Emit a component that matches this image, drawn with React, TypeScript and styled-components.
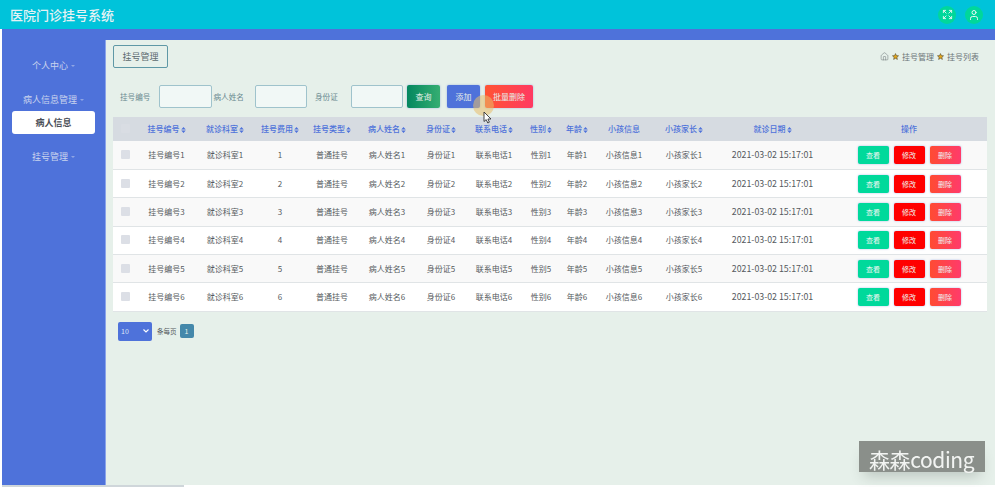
import React from 'react';
import styled, { createGlobalStyle } from 'styled-components';
import { Expand, House, User } from 'lucide-react';

const GlobalStyle = createGlobalStyle`
  html, body {
    margin: 0;
    padding: 0;
    overflow: hidden;
    background: #fff;
    font-family: "Noto Sans CJK SC", "Noto Sans", sans-serif;
  }
  * { box-sizing: border-box; }
`;

const columns = [
  { title: '挂号编号', prefix: '挂号编号', width: 59, sort: true },
  { title: '就诊科室', prefix: '就诊科室', width: 58, sort: true },
  { title: '挂号费用', prefix: '', width: 52, sort: true },
  { title: '挂号类型', prefix: '普通挂号', width: 52, sort: true, plain: true },
  { title: '病人姓名', prefix: '病人姓名', width: 58, sort: true },
  { title: '身份证', prefix: '身份证', width: 50, sort: true },
  { title: '联系电话', prefix: '联系电话', width: 56, sort: true },
  { title: '性别', prefix: '性别', width: 38, sort: true },
  { title: '年龄', prefix: '年龄', width: 34, sort: true },
  { title: '小孩信息', prefix: '小孩信息', width: 60, sort: false },
  { title: '小孩家长', prefix: '小孩家长', width: 60, sort: true },
];

const rows = [1, 2, 3, 4, 5, 6];

const SortIcon = () => (
  <SortSvg viewBox="0 0 6 8">
    <path d="M3 0 L6 3.4 H0 Z M3 8 L0 4.6 H6 Z" fill="currentColor" />
  </SortSvg>
);

const Star = () => (
  <StarSvg viewBox="0 0 24 24">
    <path
      d="M12 2 L15 8.8 L22.4 9.6 L16.8 14.6 L18.4 22 L12 18.2 L5.6 22 L7.2 14.6 L1.6 9.6 L9 8.8 Z"
      fill="#e3a51c"
      stroke="#4f4a30"
      strokeWidth="2"
    />
  </StarSvg>
);

export default function App() {
  return (
    <Page>
      <GlobalStyle />
      <Header>
        <Title>医院门诊挂号系统</Title>
        <HeaderActions>
          <RoundButton>
            <Expand size={11} strokeWidth={2} />
          </RoundButton>
          <RoundButton>
            <User size={12} strokeWidth={2} />
          </RoundButton>
        </HeaderActions>
      </Header>
      <Body>
        <Sidebar>
          <MenuGroup>
            <MenuTitle>
              个人中心<Caret />
            </MenuTitle>
          </MenuGroup>
          <MenuGroup>
            <MenuTitle>
              病人信息管理<Caret />
            </MenuTitle>
            <MenuItem>病人信息</MenuItem>
          </MenuGroup>
          <MenuGroup>
            <MenuTitle>
              挂号管理<Caret />
            </MenuTitle>
          </MenuGroup>
        </Sidebar>
        <Content>
          <TopBar>
            <TabButton>挂号管理</TabButton>
            <Breadcrumb>
              <House size={9} strokeWidth={1.4} />
              <Star />
              <span>挂号管理</span>
              <Star />
              <span>挂号列表</span>
            </Breadcrumb>
          </TopBar>
          <SearchRow>
            <SearchLabel $width={40} $pad={1}>挂号编号</SearchLabel>
            <SearchInput />
            <SearchLabel $width={43} $pad={2}>病人姓名</SearchLabel>
            <SearchInput />
            <SearchLabel $width={43.5} $pad={8}>身份证</SearchLabel>
            <SearchInput />
            <ActionButton $bg="linear-gradient(90deg, #04875f, #35ae72)" $width={33} $left={4}>
              查询
            </ActionButton>
            <ActionButton $bg="#4e72da" $width={33} $left={7}>
              添加
            </ActionButton>
            <ActionButton $bg="linear-gradient(90deg, #ff5433, #ff3a62)" $width={48} $left={5}>
              批量删除
            </ActionButton>
          </SearchRow>
          <Table>
            <colgroup>
              <col style={{ width: 24 }} />
              {columns.map((c) => (
                <col key={c.title} style={{ width: c.width }} />
              ))}
              <col style={{ width: 117 }} />
              <col />
            </colgroup>
            <thead>
              <tr>
                <HeadCell>
                  <Check $light />
                </HeadCell>
                {columns.map((c) => (
                  <HeadCell key={c.title}>
                    {c.title}
                    {c.sort && <SortIcon />}
                  </HeadCell>
                ))}
                <HeadCell>
                  就诊日期
                  <SortIcon />
                </HeadCell>
                <HeadCell>操作</HeadCell>
              </tr>
            </thead>
            <tbody>
              {rows.map((n) => (
                <Row key={n}>
                  <Cell>
                    <Check />
                  </Cell>
                  {columns.map((c) => (
                    <Cell key={c.title}>{c.plain ? c.prefix : `${c.prefix}${n}`}</Cell>
                  ))}
                  <DateCell>2021-03-02 15:17:01</DateCell>
                  <Cell $actions>
                    <RowActions>
                      <RowButton $bg="#00d99b">查看</RowButton>
                      <RowButton $bg="#ff0000">修改</RowButton>
                      <RowButton $bg="linear-gradient(90deg, #ff4b33, #ff3b6b)">删除</RowButton>
                    </RowActions>
                  </Cell>
                </Row>
              ))}
            </tbody>
          </Table>
          <Pager>
            <PageSelect>
              <span>10</span>
              <svg width="6" height="4" viewBox="0 0 6 4">
                <path d="M0.5 0.5 L3 3 L5.5 0.5" fill="none" stroke="#fff" strokeWidth="1.1" />
              </svg>
            </PageSelect>
            <PagerText>条每页</PagerText>
            <PageNumber>1</PageNumber>
          </Pager>
        </Content>
      </Body>
      <Watermark>森森coding</Watermark>
      <Pointer>
        <svg width="9" height="13" viewBox="0 0 9 13">
          <path d="M1 1 V10.5 L3.2 8.6 L4.8 12 L6.4 11.2 L4.9 8 H8 Z" fill="#fff" stroke="#333" strokeWidth="0.9" />
        </svg>
      </Pointer>
      <ScrollThumb />
    </Page>
  );
}

const Page = styled.div`
  position: relative;
  width: 995px;
  height: 487px;
  display: flex;
  flex-direction: column;
  overflow: hidden;
  filter: blur(0.45px);
`;

const Header = styled.header`
  height: 29px;
  flex: none;
  display: flex;
  align-items: center;
  justify-content: space-between;
  padding: 0 12px 0 10px;
  background: #00c3da;
`;

const Title = styled.div`
  font-size: 13px;
  font-weight: 500;
  color: #e4f2f4;
`;

const HeaderActions = styled.div`
  display: flex;
  gap: 9px;
`;

const RoundButton = styled.div`
  width: 18px;
  height: 18px;
  border-radius: 50%;
  display: flex;
  align-items: center;
  justify-content: center;
  background: #00d79b;
  color: #e8f7f2;
`;

const Body = styled.div`
  height: 456px;
  flex: none;
  display: flex;
  margin-left: 2px;
  padding-top: 11px;
  background: #4e72da;
`;

const Sidebar = styled.nav`
  width: 103px;
  flex: none;
  padding-top: 14px;
  background: #4e72da;
`;

const MenuGroup = styled.div`
  margin-bottom: 11px;
`;

const MenuTitle = styled.div`
  height: 23px;
  display: flex;
  align-items: center;
  justify-content: center;
  font-size: 9px;
  color: #c9d4ee;
`;

const Caret = styled.i`
  width: 0;
  height: 0;
  margin: 1px 0 0 3px;
  border-left: 2px solid transparent;
  border-right: 2px solid transparent;
  border-top: 2px solid #8fa5e4;
`;

const MenuItem = styled.div`
  width: 83px;
  height: 23px;
  margin-left: 10px;
  display: flex;
  align-items: center;
  justify-content: center;
  border-radius: 3px;
  background: #fff;
  font-size: 9px;
  font-weight: 700;
  color: #4b4f58;
`;

const Content = styled.main`
  flex: 1;
  min-width: 0;
  padding: 5px 8px 0;
  background: #e6f0ea;
  border-left: 1px solid #8aa3ea;
`;

const TopBar = styled.div`
  display: flex;
  align-items: center;
  justify-content: space-between;
`;

const TabButton = styled.div`
  width: 55px;
  height: 23px;
  margin-left: -1px;
  display: flex;
  align-items: center;
  justify-content: center;
  border: 1px solid #5f98a6;
  border-radius: 2px;
  font-size: 9px;
  color: #5d6b70;
`;

const Breadcrumb = styled.div`
  display: flex;
  align-items: center;
  gap: 2px;
  padding-right: 8px;
  font-size: 8px;
  color: #6b7478;
`;

const StarSvg = styled.svg`
  width: 7px;
  height: 7px;
  margin: 0 1px;
`;

const SearchRow = styled.div`
  display: flex;
  align-items: center;
  height: 23px;
  margin-top: 17px;
  padding-left: 5px;
`;

const SearchLabel = styled.span<{ $width: number; $pad: number }>`
  width: ${(p) => p.$width}px;
  padding-left: ${(p) => p.$pad}px;
  font-size: 7.6px;
  color: #6a8a90;
  white-space: nowrap;
`;

const SearchInput = styled.div`
  width: 52.5px;
  height: 23px;
  border: 1px solid #9fc3cc;
  border-radius: 2px;
  background: #f1f8f6;
`;

const ActionButton = styled.div<{ $bg: string; $width: number; $left: number }>`
  width: ${(p) => p.$width}px;
  height: 23px;
  margin-left: ${(p) => p.$left}px;
  display: flex;
  align-items: center;
  justify-content: center;
  border-radius: 2px;
  background: ${(p) => p.$bg};
  box-shadow: 0 0 2px rgba(78, 114, 218, 0.5);
  font-size: 8px;
  color: #e6efe9;
`;

const Table = styled.table`
  width: 874px;
  margin: 9px 0 0 -1px;
  border-collapse: collapse;
  table-layout: fixed;
  background: #fff;
`;

const HeadCell = styled.th`
  height: 24px;
  padding: 0 0 1px;
  background: #d6dbe1;
  font-size: 8px;
  font-weight: 500;
  text-align: center;
  white-space: nowrap;
  color: #4e72da;
`;

const SortSvg = styled.svg`
  width: 5px;
  height: 6px;
  margin-left: 1px;
  vertical-align: -0.5px;
`;

const Row = styled.tr`
  height: 28.4px;
  border-bottom: 1px solid #e0e4e6;
  &:nth-child(odd) {
    background: #f9f9f9;
  }
`;

const Cell = styled.td<{ $actions?: boolean }>`
  padding: ${(p) => (p.$actions ? '0' : '0 0 1px')};
  font-size: 8px;
  text-align: center;
  white-space: nowrap;
  color: #555a5e;
`;

const DateCell = styled(Cell)`
  font-size: 8.8px;
`;

const Check = styled.div<{ $light?: boolean }>`
  width: 9px;
  height: 9px;
  margin: 0 auto;
  border-radius: 1px;
  background: ${(p) => (p.$light ? '#d9dde3' : '#dcdfe6')};
`;

const RowActions = styled.div`
  display: flex;
  justify-content: center;
  gap: 5px;
`;

const RowButton = styled.div<{ $bg: string }>`
  width: 31px;
  height: 18px;
  display: flex;
  align-items: center;
  justify-content: center;
  border-radius: 2px;
  background: ${(p) => p.$bg};
  box-shadow: 0 0 2px rgba(78, 114, 218, 0.5);
  font-size: 7px;
  color: #eef6f2;
`;

const Pager = styled.div`
  display: flex;
  align-items: center;
  height: 19px;
  margin-top: 10px;
  padding-left: 4px;
`;

const PageSelect = styled.div`
  width: 34px;
  height: 19px;
  display: flex;
  align-items: center;
  justify-content: space-between;
  padding: 0 3px;
  border-radius: 2px;
  background: #4e72da;
  font-size: 7px;
  color: #dfe6f8;
`;

const PagerText = styled.span`
  margin-left: 5px;
  font-size: 6.5px;
  color: #555a5e;
`;

const PageNumber = styled.div`
  width: 14px;
  height: 14px;
  margin-left: 3px;
  display: flex;
  align-items: center;
  justify-content: center;
  border-radius: 2px;
  background: #4488aa;
  font-size: 7px;
  color: #e6f0ea;
`;

const Watermark = styled.div`
  position: absolute;
  left: 859px;
  top: 441px;
  width: 126px;
  height: 31px;
  padding: 6px 0 0 10px;
  background: #8a8f8a;
  box-shadow: 0 9px 14px -5px rgba(60, 70, 65, 0.25);
  font-size: 21px;
  letter-spacing: -0.4px;
  line-height: 25px;
  white-space: nowrap;
  color: #f2f4f2;
`;

const Pointer = styled.div`
  position: absolute;
  left: 473px;
  top: 95px;
  width: 21px;
  height: 21px;
  border-radius: 50%;
  padding: 10px 0 0 10px;
  background: rgba(232, 190, 105, 0.55);
`;

const ScrollThumb = styled.div`
  position: absolute;
  left: 2px;
  bottom: 0;
  width: 182px;
  height: 2px;
  background: #cfd6da;
`;
